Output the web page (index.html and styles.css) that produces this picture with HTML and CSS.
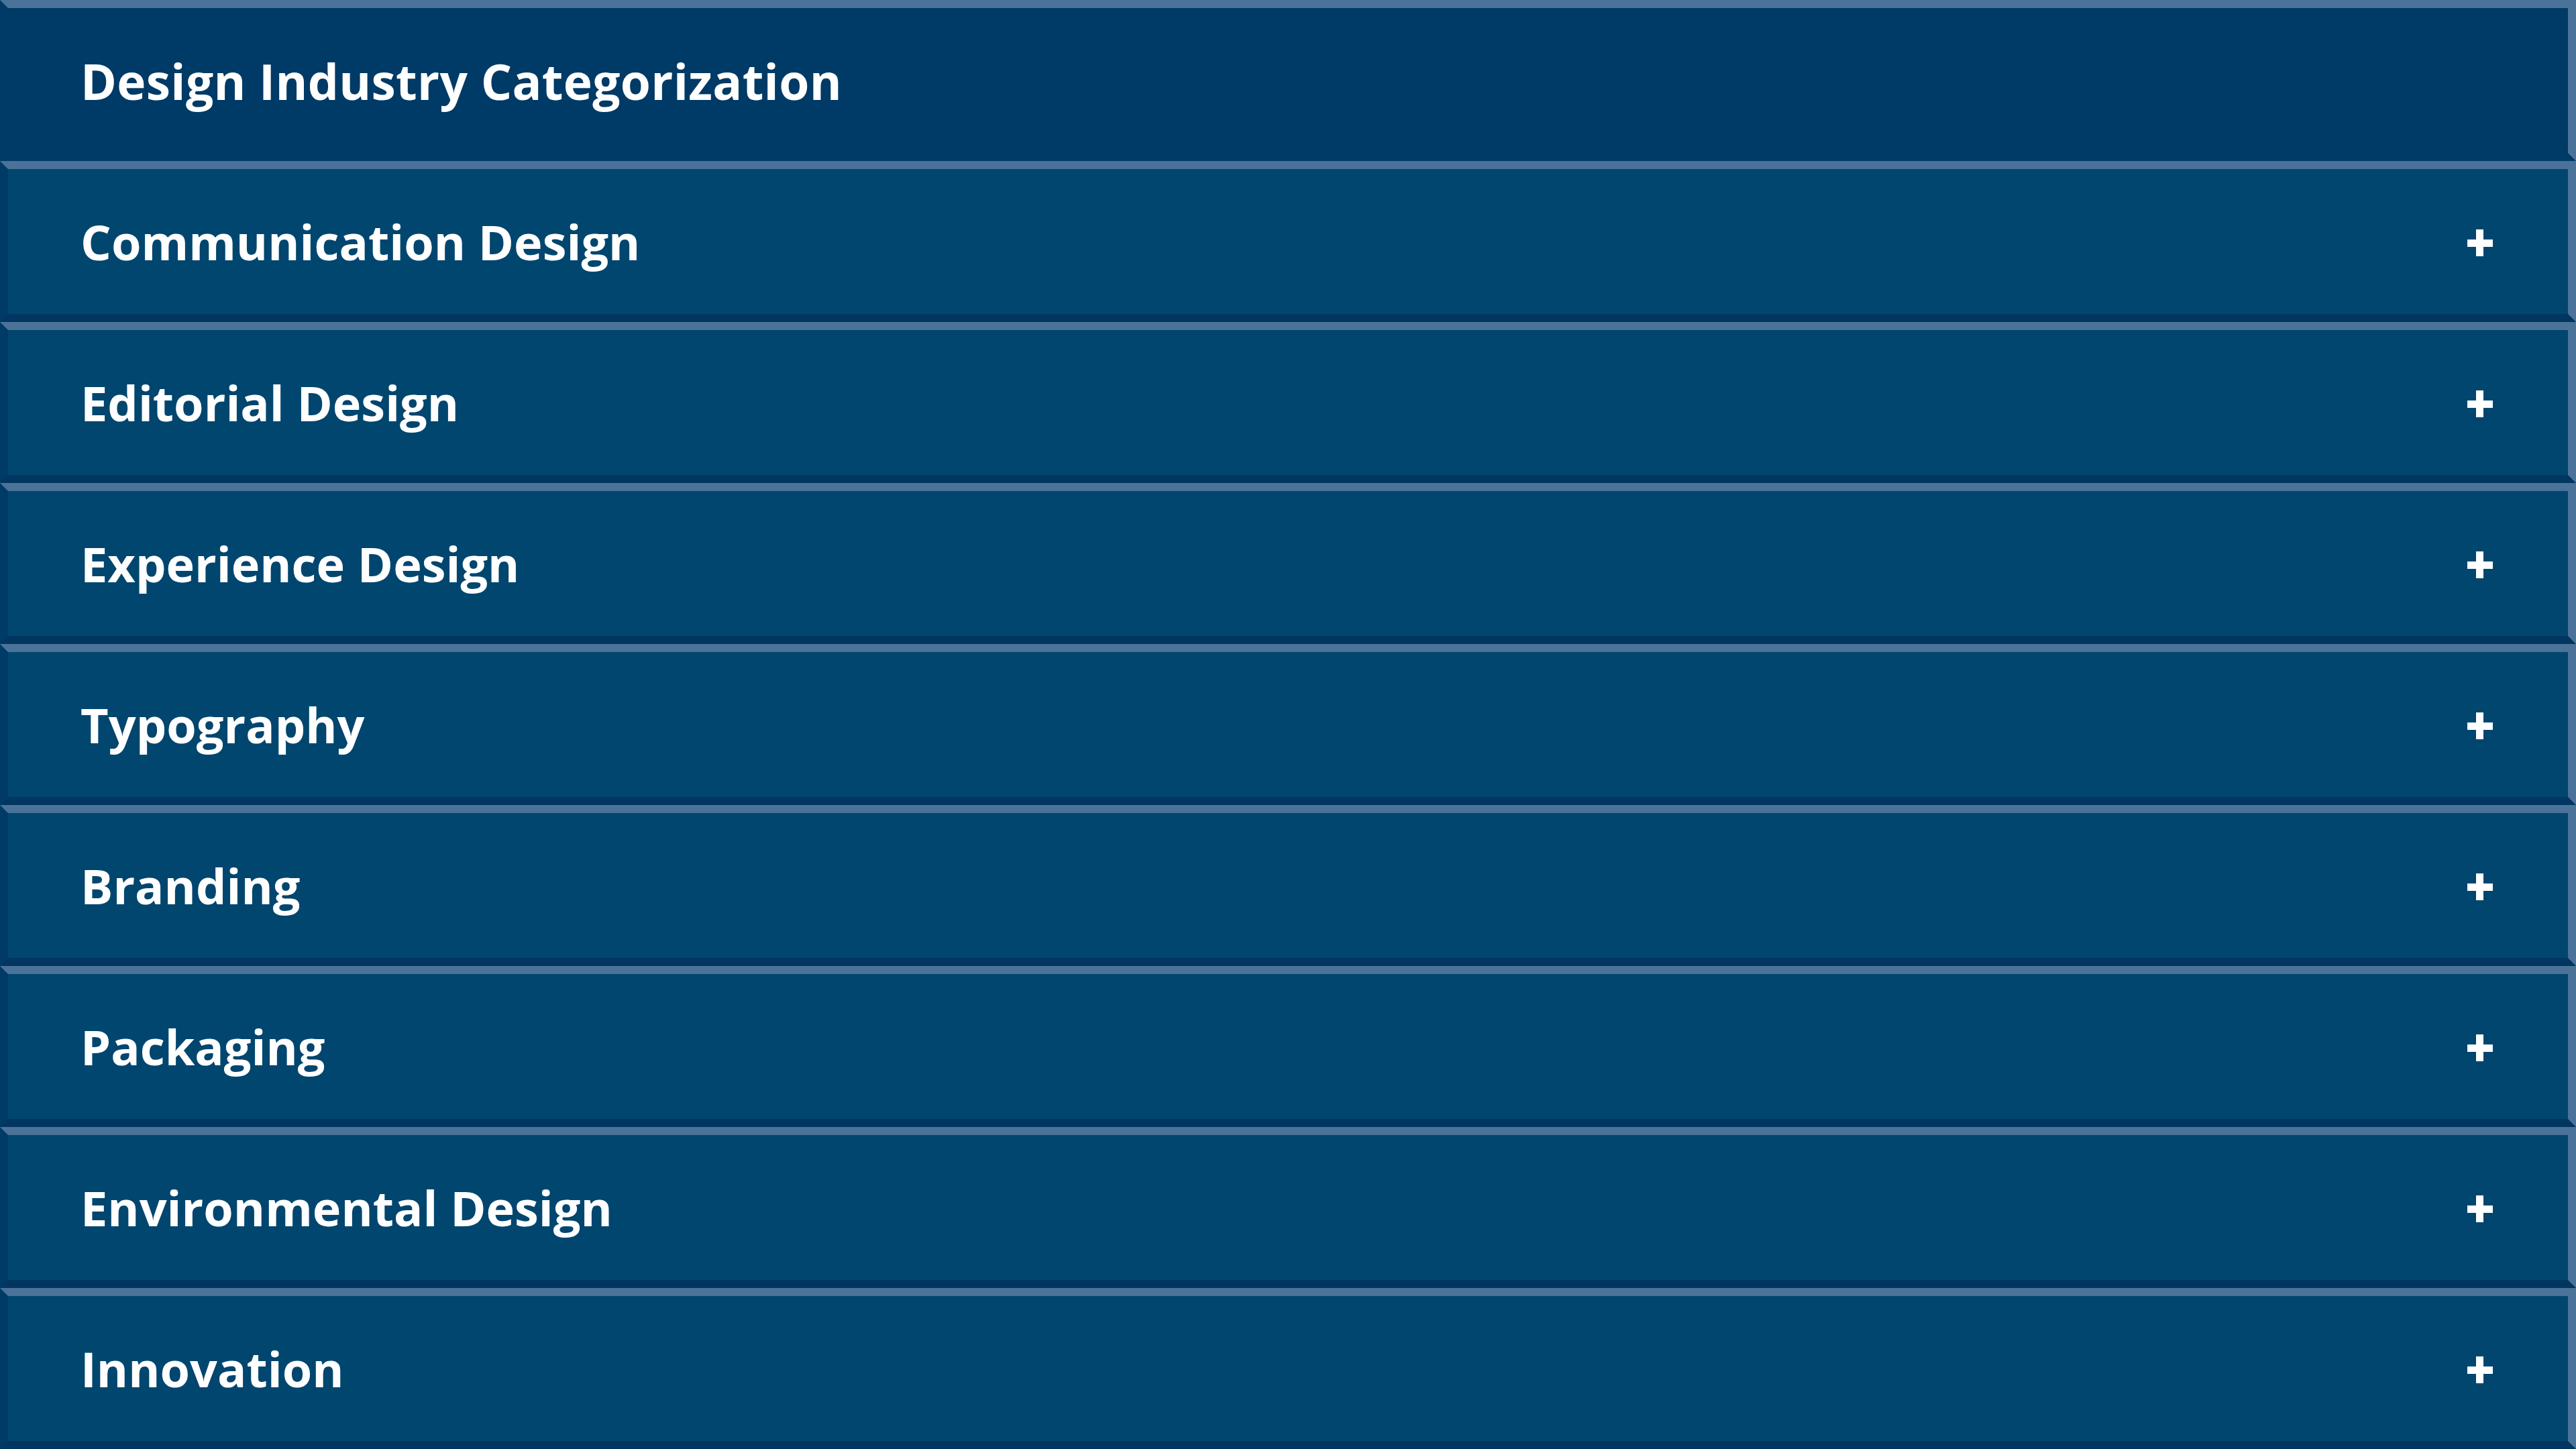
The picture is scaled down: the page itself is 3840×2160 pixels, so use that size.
FILE: index.html
```html
<!DOCTYPE html>
<html lang="en">
<head>
    <meta charset="UTF-8">
    <meta name="viewport" content="width=device-width, initial-scale=1.0">
    <title>Design Industry Categorization</title>
    <link rel="stylesheet" href="styles.css">
</head>
<body>
    <div class="accordion">
        <!-- Header -->
        <div class="acc-header">
            <h1>Design Industry Categorization</h1>
        </div>

        <!-- Categories -->
        <div class="acc-item"><span>Communication Design</span><span class="plus"></span></div>
        <div class="acc-item"><span>Editorial Design</span><span class="plus"></span></div>
        <div class="acc-item"><span>Experience Design</span><span class="plus"></span></div>
        <div class="acc-item"><span>Typography</span><span class="plus"></span></div>
        <div class="acc-item"><span>Branding</span><span class="plus"></span></div>
        <div class="acc-item"><span>Packaging</span><span class="plus"></span></div>
        <div class="acc-item"><span>Environmental Design</span><span class="plus"></span></div>
        <div class="acc-item"><span>Innovation</span><span class="plus"></span></div>
    </div>
</body>
</html>
```
FILE: styles.css
```css
/* Base Styles */
* {
    margin: 0;
    padding: 0;
    box-sizing: border-box;
}
body {
    background-color: #00466f;
    font-family: "Open Sans", "Noto Sans", sans-serif;
    color: #fff;
}
.accordion {
    display: flex;
    flex-direction: column;
    height: 100vh;
}
/* Shared bevelled row */
.acc-header, .acc-item {
    height: 240px;
    display: flex;
    align-items: center;
    justify-content: space-between;
    padding: 0 112px 0 108px;
    border-width: 12px;
    border-style: solid;
    border-top-color: #4b7399;
    border-right-color: #4b7399;
}
/* Header */
.acc-header {
    background-color: #003a66;
    border-left-color: #003a66;
    border-bottom-color: #003a66;
}
.acc-header h1 {
    font-size: 73px;
    font-weight: 700;
    letter-spacing: 0.3px;
}
/* Items */
.acc-item {
    background-color: #00466f;
    border-left-color: #003b67;
    border-bottom-color: #00365f;
    font-size: 72px;
    font-weight: 700;
    letter-spacing: 0;
    cursor: pointer;
}
.plus {
    position: relative;
    width: 38px;
    height: 40px;
    margin-top: 4px;
}
.plus::before, .plus::after {
    content: "";
    position: absolute;
    background-color: #fff;
}
.plus::before {
    left: 0;
    right: 0;
    top: 15px;
    height: 11px;
}
.plus::after {
    top: 0;
    bottom: 0;
    left: 13px;
    width: 11px;
}
```
